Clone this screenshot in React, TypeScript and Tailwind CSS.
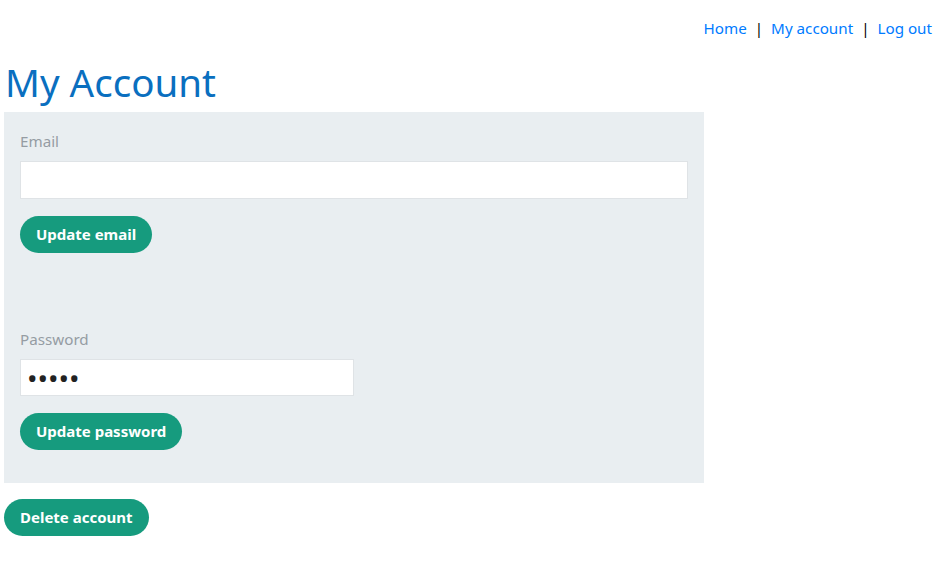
export default function App() {
  return (
    <div className="min-h-screen bg-white px-1 text-[15.2px] text-[#212529] [font-family:'Noto_Sans','Open_Sans',sans-serif]">
      <nav className="flex justify-end pt-4 pr-2 leading-6">
        <a href="#" className="text-[#007bff]">Home</a>
        <span className="mx-2 text-black">|</span>
        <a href="#" className="text-[#007bff]">My account</a>
        <span className="mx-2 text-black">|</span>
        <a href="#" className="text-[#007bff]">Log out</a>
      </nav>

      <h1 className="mt-[18px] pl-px text-[38.5px] leading-[48px] text-[#0a6fbf]">My Account</h1>

      <div className="mt-1.5 w-[700px] bg-[#e9eef1] px-4 pt-[17px] pb-[33px]">
        <label className="block leading-6 text-[#959ca3]">Email</label>
        <input
          type="email"
          className="mt-2 block h-[38px] w-full border border-[#dfe3e6] bg-white px-2 outline-none"
        />
        <button className="mt-[17px] h-[37px] rounded-full bg-[#169b7e] px-4 text-[15px] font-bold text-white">
          Update email
        </button>

        <label className="mt-[74px] block leading-6 text-[#959ca3]">Password</label>
        <input
          type="password"
          defaultValue="12345"
          className="mt-2 block h-[37px] w-[334px] border border-[#dfe3e6] bg-white px-[6px] text-[28px] text-[#222] outline-none"
        />
        <button className="mt-[17px] h-[37px] rounded-full bg-[#169b7e] px-4 text-[15px] font-bold text-white">
          Update password
        </button>
      </div>

      <button className="mt-4 h-[37px] rounded-full bg-[#169b7e] px-4 text-[15px] font-bold text-white">
        Delete account
      </button>
    </div>
  );
}
